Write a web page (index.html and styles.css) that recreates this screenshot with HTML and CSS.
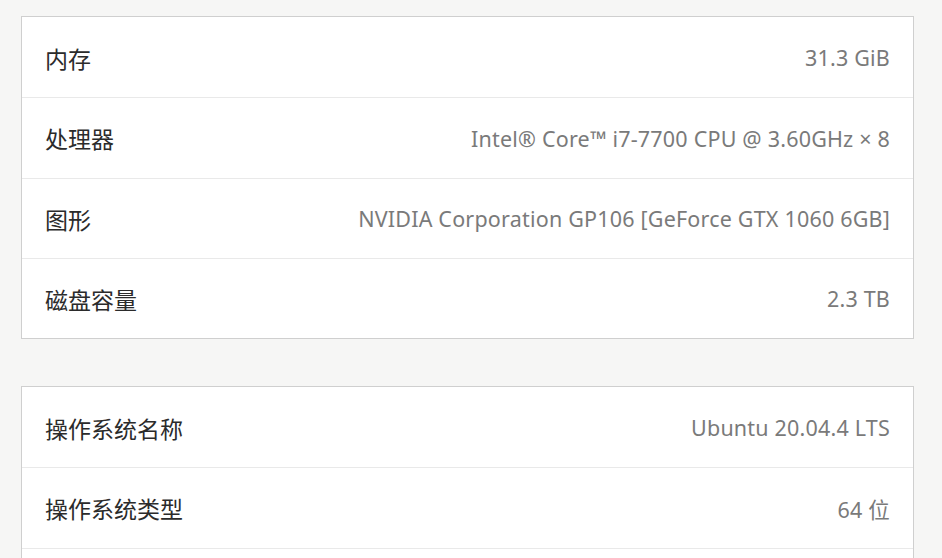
FILE: index.html
```html
<!DOCTYPE html>
<html lang="zh-CN">
<head>
<meta charset="utf-8">
<title>关于</title>
<link rel="stylesheet" href="styles.css">
</head>
<body>
<main class="page">
  <section class="card">
    <div class="row"><span class="label">内存</span><span class="value">31.3 GiB</span></div>
    <div class="row"><span class="label">处理器</span><span class="value">Intel® Core™ i7-7700 CPU @ 3.60GHz × 8</span></div>
    <div class="row"><span class="label">图形</span><span class="value">NVIDIA Corporation GP106 [GeForce GTX 1060 6GB]</span></div>
    <div class="row"><span class="label">磁盘容量</span><span class="value">2.3 TB</span></div>
  </section>
  <section class="card">
    <div class="row"><span class="label">操作系统名称</span><span class="value">Ubuntu 20.04.4 LTS</span></div>
    <div class="row"><span class="label">操作系统类型</span><span class="value">64 位</span></div>
    <div class="row"></div>
  </section>
</main>
</body>
</html>
```
FILE: styles.css
```css
html, body {
  margin: 0;
  padding: 0;
  background: #f6f6f5;
  overflow: hidden;
  height: 558px;
}
.page {
  display: flex;
  flex-direction: column;
  gap: 47px;
  padding: 16px 28px 0 21px;
  font-family: "Noto Sans", "Noto Sans CJK SC", sans-serif;
}
.card {
  background: #ffffff;
  border: 1px solid #cfcfcf;
  display: flex;
  flex-direction: column;
}
.row {
  box-sizing: border-box;
  height: 80.25px;
  display: flex;
  align-items: center;
  justify-content: space-between;
  padding: 1px 23px 0 23px;
  border-top: 1px solid #e9e9e9;
}
.row:first-child {
  border-top: none;
}
.label {
  font-family: "Noto Sans CJK SC", sans-serif;
  font-size: 23px;
  color: #2b2b2b;
}
.value {
  font-size: 21.5px;
  color: #7a7a7a;
  letter-spacing: 0.2px;
}
```
